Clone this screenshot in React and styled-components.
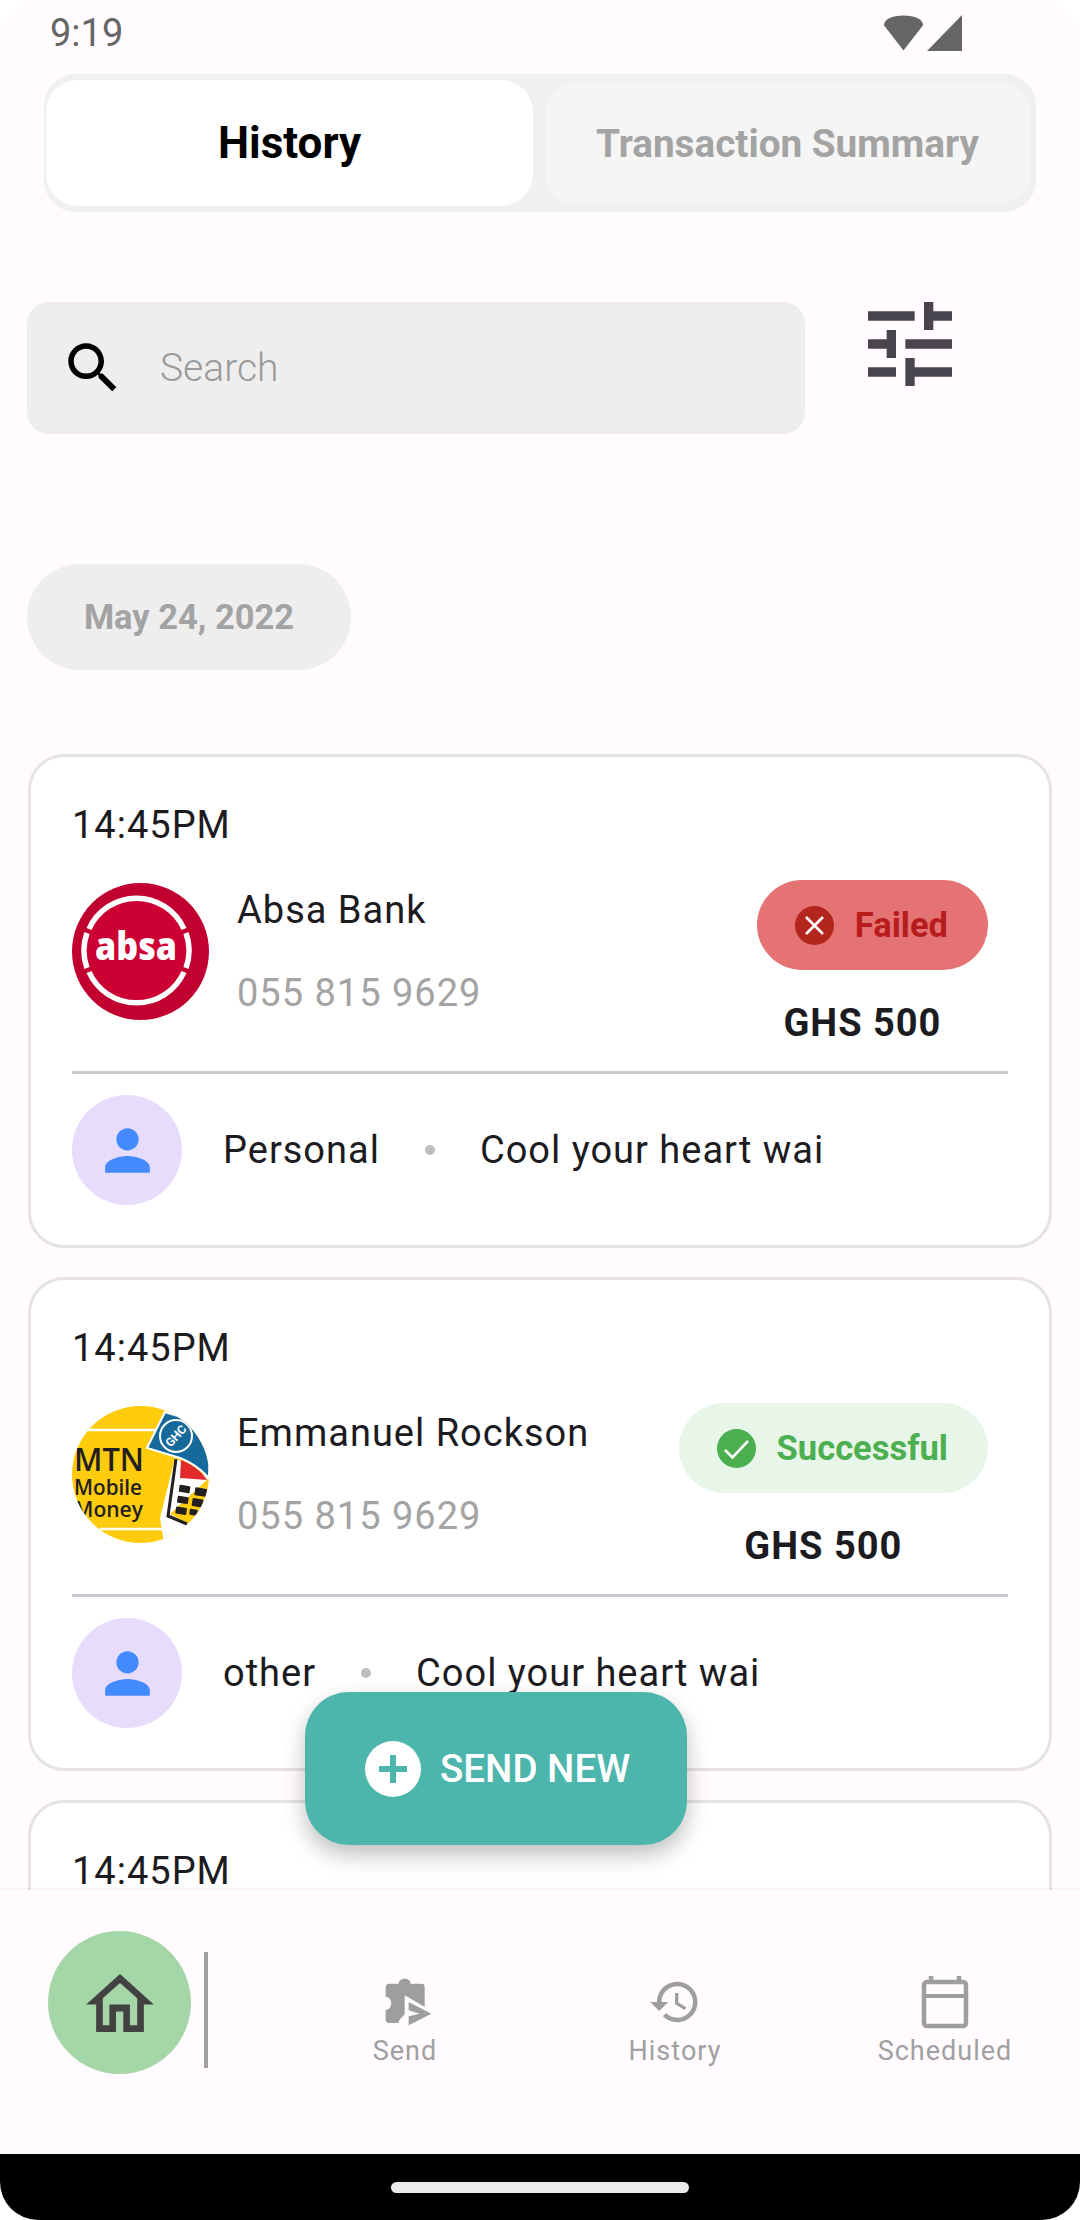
import React from 'react';
import styled, { createGlobalStyle } from 'styled-components';

const GlobalStyle = createGlobalStyle`
  html, body {
    margin: 0;
    padding: 0;
    background: #fff;
    font-family: Roboto, "Liberation Sans", sans-serif;
  }
`;

const WifiIcon = () => (
  <svg width="41" height="36" viewBox="0 0 42 36">
    <path d="M1 10 C1 4 9 0 21 0 C33 0 41 4 41 10 L21 36 Z" fill="#666" />
  </svg>
);

const SignalIcon = () => (
  <svg width="35" height="36" viewBox="0 0 35 36">
    <path d="M35 0 V36 H0 Z" fill="#666" />
  </svg>
);

const SearchIcon = () => (
  <svg width="66" height="66" viewBox="0 0 24 24" fill="#000">
    <path d="M15.5 14h-.79l-.28-.27C15.41 12.59 16 11.11 16 9.5 16 5.91 13.09 3 9.5 3S3 5.91 3 9.5 5.91 16 9.5 16c1.61 0 3.09-.59 4.23-1.57l.27.28v.79l5 4.99L20.49 19l-4.99-5zm-6 0C7.01 14 5 11.99 5 9.5S7.01 5 9.5 5 14 7.01 14 9.5 11.99 14 9.5 14z" />
  </svg>
);

const TuneIcon = () => (
  <svg width="112" height="112" viewBox="0 0 24 24" fill="#49454f">
    <path d="M3 17v2h6v-2H3zM3 5v2h10V5H3zm10 16v-2h8v-2h-8v-2h-2v6h2zM7 9v2H3v2h4v2h2V9H7zm14 4v-2H11v2h10zm-6-4h2V7h4V5h-4V3h-2v6z" />
  </svg>
);

const PersonIcon = () => (
  <svg width="67" height="67" viewBox="0 0 24 24" fill="#448aff">
    <path d="M12 12c2.21 0 4-1.79 4-4s-1.79-4-4-4-4 1.79-4 4 1.79 4 4 4zm0 2c-2.67 0-8 1.34-8 4v2h16v-2c0-2.66-5.33-4-8-4z" />
  </svg>
);

const AbsaLogo = () => (
  <svg width="137" height="137" viewBox="0 0 137 137">
    <circle cx="68.5" cy="68.5" r="68.5" fill="#c1002f" />
    <circle cx="64" cy="67" r="50" fill="#cc0033" />
    <g fill="none" stroke="#fff" strokeWidth="5.5">
      <path d="M17 46 A52 52 0 0 1 112 46" />
      <path d="M17 89 A52 52 0 0 0 112 89" />
      <path d="M15 50 A52 52 0 0 0 15 85" />
      <path d="M114 50 A52 52 0 0 1 114 85" />
    </g>
    <text
      x="64"
      y="77"
      fill="#fff"
      fontFamily="'Open Sans', sans-serif"
      fontSize="38"
      fontWeight="800"
      textAnchor="middle"
      textLength="82"
      lengthAdjust="spacingAndGlyphs"
    >
      absa
    </text>
  </svg>
);

const MtnLogo = () => (
  <svg width="137" height="137" viewBox="0 0 137 137">
    <defs>
      <clipPath id="mtnClip">
        <circle cx="68.5" cy="68.5" r="68.5" />
      </clipPath>
    </defs>
    <g clipPath="url(#mtnClip)">
      <rect width="137" height="137" fill="#ffcb0d" />
      <path d="M12 24 H90 M28 123 H112" stroke="#fff" strokeWidth="2.5" />
      <path d="M93 6 L137 20 L137 72 C128 62 118 56 108 52 L75 42 Z" fill="#15699b" stroke="#fff" strokeWidth="2" />
      <circle cx="104" cy="30" r="16" fill="#15699b" stroke="#fff" strokeWidth="2" />
      <text
        x="104"
        y="34"
        fill="#fff"
        fontFamily="Roboto, sans-serif"
        fontSize="12"
        fontWeight="700"
        textAnchor="middle"
        transform="rotate(-48 104 30)"
      >
        GHC
      </text>
      <path d="M98 108 L137 128 L137 137 L92 137 L88 112 L103 52 L137 72 Z" fill="#fff" />
      <path d="M109 54 C120 58 130 66 135 74 L108 72 Z" fill="#e12a2b" />
      <path d="M104 53 L96 110 L115 118" fill="none" stroke="#231f20" strokeWidth="3" />
      <g fill="#231f20" transform="rotate(9 115 90)">
        <rect x="106" y="80" width="11" height="7" rx="1" />
        <rect x="122" y="80" width="12" height="8" rx="1" />
        <rect x="106" y="91" width="11" height="7" rx="1" />
        <rect x="121" y="91" width="11" height="8" rx="1" />
        <rect x="106" y="102" width="11" height="7" rx="1" />
        <rect x="120" y="102" width="8" height="6" rx="1" />
      </g>
      <text x="2" y="65" fill="#231f20" fontFamily="'Open Sans', sans-serif" fontSize="32" fontWeight="600" textLength="70" lengthAdjust="spacingAndGlyphs">
        MTN
      </text>
      <text x="2" y="89" fill="#231f20" fontFamily="'Open Sans', sans-serif" fontSize="21" fontWeight="600" textLength="68" lengthAdjust="spacingAndGlyphs">
        Mobile
      </text>
      <text x="2" y="111" fill="#231f20" fontFamily="'Open Sans', sans-serif" fontSize="21" fontWeight="600" textLength="69" lengthAdjust="spacingAndGlyphs">
        Money
      </text>
    </g>
  </svg>
);

const FailedIcon = () => (
  <svg width="39" height="39" viewBox="0 0 39 39">
    <circle cx="19.5" cy="19.5" r="19.5" fill="#b3261e" />
    <path d="M11 11 L28 28 M28 11 L11 28" stroke="#fff" strokeWidth="2.6" fill="none" />
  </svg>
);

const SuccessIcon = () => (
  <svg width="39" height="39" viewBox="0 0 39 39">
    <circle cx="19.5" cy="19.5" r="19.5" fill="#4caf50" />
    <path d="M8 21 L15.5 28.5 L31 12" stroke="#fff" strokeWidth="2.6" fill="none" />
  </svg>
);

const PlusIcon = () => (
  <svg width="56" height="56" viewBox="0 0 56 56">
    <circle cx="28" cy="28" r="28" fill="#fff" />
    <path d="M28 14 V42 M14 28 H42" stroke="#4db6ac" strokeWidth="6" fill="none" />
  </svg>
);

const HomeIcon = () => (
  <svg width="68" height="58" viewBox="138 155 204 175">
    <path
      fillRule="evenodd"
      fill="#424242"
      d="M240 155 L342 247 H312 V330 H250 V268 H228 V330 H168 V247 H138 Z M240 182 L188 228 V310 H208 V247 H270 V310 H292 V228 Z"
    />
  </svg>
);

const SendIcon = () => (
  <svg width="50" height="50" viewBox="125 80 150 150">
    <path
      fill="#9e9e9e"
      d="M145 100 H172 C172 80 208 80 208 100 H240 Q250 100 250 110 V190 H190 C190 195 172 205 172 218 H145 Q133 218 133 208 V178 C155 180 155 138 133 140 V112 Q133 100 145 100 Z"
    />
    <path fill="#fffbfe" d="M190 135 L285 190 L190 245 Z" />
    <path fill="#9e9e9e" d="M202 155 L270 190 L202 225 V198 L235 190 L202 180 Z" />
  </svg>
);

const HistoryIcon = () => (
  <svg width="54" height="54" viewBox="0 0 24 24" fill="#9e9e9e">
    <path d="M13 3c-4.97 0-9 4.03-9 9H1l3.89 3.89.07.14L9 12H6c0-3.87 3.13-7 7-7s7 3.13 7 7-3.13 7-7 7c-1.93 0-3.68-.79-4.94-2.06l-1.42 1.42C8.27 19.99 10.51 21 13 21c4.97 0 9-4.03 9-9s-4.03-9-9-9zm-1 5v5l4.28 2.54.72-1.21-3.5-2.08V8H12z" />
  </svg>
);

const CalendarIcon = () => (
  <svg width="50" height="54" viewBox="0 0 50 54">
    <rect x="4" y="7" width="42" height="44" rx="3" fill="none" stroke="#9e9e9e" strokeWidth="4.5" />
    <path d="M4 21 H46" stroke="#9e9e9e" strokeWidth="4" />
    <path d="M11 1 V7 M39 1 V7" stroke="#9e9e9e" strokeWidth="4.5" />
  </svg>
);

const transactions = [
  { name: 'Absa Bank', logo: <AbsaLogo />, status: 'failed', category: 'Personal' },
  { name: 'Emmanuel Rockson', logo: <MtnLogo />, status: 'success', category: 'other' },
  { name: 'Absa Bank', logo: <AbsaLogo />, status: 'failed', category: 'Personal' },
];

function TransactionCard({ item }) {
  const failed = item.status === 'failed';
  return (
    <Card>
      <Time>14:45PM</Time>
      <MainRow>
        <Logo>{item.logo}</Logo>
        <Details>
          <Name>{item.name}</Name>
          <Phone>055 815 9629</Phone>
        </Details>
        <StatusColumn>
          <StatusPill $failed={failed}>
            {failed ? <FailedIcon /> : <SuccessIcon />}
            <span>{failed ? 'Failed' : 'Successful'}</span>
          </StatusPill>
          <Amount>GHS 500</Amount>
        </StatusColumn>
      </MainRow>
      <Divider />
      <MetaRow>
        <PersonBadge>
          <PersonIcon />
        </PersonBadge>
        <MetaText>{item.category}</MetaText>
        <Dot />
        <MetaText>Cool your heart wai</MetaText>
      </MetaRow>
    </Card>
  );
}

function App() {
  return (
    <>
      <GlobalStyle />
      <Screen>
        <StatusBar>
          <Clock>9:19</Clock>
          <StatusIcons>
            <WifiIcon />
            <SignalIcon />
          </StatusIcons>
        </StatusBar>
        <Content>
          <Segment>
            <ActiveTab>History</ActiveTab>
            <InactiveTab>Transaction Summary</InactiveTab>
          </Segment>
          <SearchRow>
            <SearchBox>
              <SearchIcon />
              <Placeholder>Search</Placeholder>
            </SearchBox>
            <FilterButton>
              <TuneIcon />
            </FilterButton>
          </SearchRow>
          <DatePill>May 24, 2022</DatePill>
          <CardList>
            {transactions.map((item, i) => (
              <TransactionCard key={i} item={item} />
            ))}
          </CardList>
        </Content>
        <Fab>
          <PlusIcon />
          SEND NEW
        </Fab>
        <BottomNav>
          <HomeCircle>
            <HomeIcon />
          </HomeCircle>
          <NavLine />
          <NavItems>
            <NavItem>
              <NavIcon $shift={5}>
                <SendIcon />
              </NavIcon>
              Send
            </NavItem>
            <NavItem>
              <NavIcon>
                <HistoryIcon />
              </NavIcon>
              History
            </NavItem>
            <NavItem>
              <NavIcon>
                <CalendarIcon />
              </NavIcon>
              Scheduled
            </NavItem>
          </NavItems>
        </BottomNav>
        <GestureBar>
          <GestureHandle />
        </GestureBar>
      </Screen>
    </>
  );
}
export default App;

const Screen = styled.div`
  position: relative;
  width: 1080px;
  height: 2220px;
  display: flex;
  flex-direction: column;
  overflow: hidden;
  background: #fffbfe;
  border-radius: 38px;
`;
const StatusBar = styled.div`
  height: 66px;
  flex-shrink: 0;
  display: flex;
  justify-content: space-between;
  align-items: flex-start;
  padding: 13px 118px 0 50px;
  box-sizing: border-box;
`;
const Clock = styled.div`
  font-size: 38px;
  line-height: 40px;
  color: #666;
`;
const StatusIcons = styled.div`
  display: flex;
  gap: 3px;
  padding-top: 2px;
`;
const Content = styled.div`
  flex: 1;
  min-height: 0;
  overflow: hidden;
  padding-top: 8px;
`;
const Segment = styled.div`
  height: 138px;
  margin: 0 44px;
  box-sizing: border-box;
  padding: 6px 6px 6px 2px;
  display: flex;
  gap: 12px;
  background: #eff0ef;
  border-radius: 32px;
`;
const ActiveTab = styled.div`
  width: 487px;
  display: flex;
  align-items: center;
  justify-content: center;
  background: #fff;
  border-radius: 32px;
  font-size: 44px;
  font-weight: 700;
  color: #000;
`;
const InactiveTab = styled.div`
  flex: 1;
  margin: 3px 0;
  display: flex;
  align-items: center;
  justify-content: center;
  background: #f4f5f4;
  border-radius: 28px;
  font-size: 38.7px;
  font-weight: 700;
  color: #a3a3a3;
`;
const SearchRow = styled.div`
  margin-top: 90px;
  padding-left: 27px;
  display: flex;
  align-items: flex-start;
`;
const SearchBox = styled.div`
  width: 778px;
  height: 132px;
  box-sizing: border-box;
  padding-left: 33px;
  display: flex;
  align-items: center;
  gap: 34px;
  background: #eee;
  border-radius: 22px;
`;
const Placeholder = styled.span`
  font-size: 39px;
  font-weight: 300;
  color: #9a9a9a;
`;
const FilterButton = styled.div`
  margin: -14px 0 0 49px;
  line-height: 0;
`;
const DatePill = styled.div`
  width: 324px;
  height: 106px;
  margin: 130px 0 0 27px;
  display: flex;
  align-items: center;
  justify-content: center;
  background: #eee;
  border-radius: 53px;
  font-size: 34.5px;
  font-weight: 700;
  color: #a3a3a3;
`;
const CardList = styled.div`
  margin-top: 84px;
  padding: 0 28px;
  display: flex;
  flex-direction: column;
  gap: 29px;
`;
const Card = styled.div`
  height: 494px;
  flex-shrink: 0;
  box-sizing: border-box;
  padding: 47px 41px 0;
  background: #fff;
  border: 3px solid #e5e3e6;
  border-radius: 36px;
`;
const Time = styled.div`
  font-size: 38px;
  line-height: 42px;
  color: #1c1b1f;
  letter-spacing: 1px;
`;
const MainRow = styled.div`
  margin-top: 34px;
  height: 191px;
  display: flex;
  align-items: flex-start;
`;
const Logo = styled.div`
  width: 137px;
  height: 137px;
  margin-top: 3px;
  flex-shrink: 0;
  line-height: 0;
`;
const Details = styled.div`
  margin-left: 28px;
  padding-top: 8px;
  display: flex;
  flex-direction: column;
  gap: 39px;
`;
const Name = styled.div`
  font-size: 38px;
  line-height: 44px;
  letter-spacing: 1px;
  color: #1c1b1f;
`;
const Phone = styled.div`
  font-size: 38px;
  line-height: 44px;
  letter-spacing: 1px;
  color: #a3a3a3;
`;
const StatusColumn = styled.div`
  margin: 0 20px 0 auto;
  display: flex;
  flex-direction: column;
  align-items: center;
`;
const StatusPill = styled.div`
  height: 90px;
  box-sizing: border-box;
  padding: 0 40px 0 38px;
  display: flex;
  align-items: center;
  gap: 21px;
  border-radius: 45px;
  font-size: 34.5px;
  font-weight: 700;
  background: ${(p) => (p.$failed ? '#e57373' : '#e8f5e9')};
  color: ${(p) => (p.$failed ? '#b71c1c' : '#4caf50')};
  svg {
    flex-shrink: 0;
  }
`;
const Amount = styled.div`
  margin-top: 30px;
  padding-right: 20px;
  font-size: 38px;
  line-height: 46px;
  font-weight: 700;
  letter-spacing: 1px;
  color: #1c1b1f;
`;
const Divider = styled.div`
  height: 3px;
  background: #cac7d0;
`;
const MetaRow = styled.div`
  margin-top: 21px;
  display: flex;
  align-items: center;
`;
const PersonBadge = styled.div`
  width: 110px;
  height: 110px;
  margin-right: 41px;
  display: flex;
  align-items: center;
  justify-content: center;
  background: #e8dcfd;
  border-radius: 50%;
`;
const MetaText = styled.div`
  font-size: 38px;
  letter-spacing: 1px;
  color: #1c1b1f;
`;
const Dot = styled.div`
  width: 10px;
  height: 10px;
  margin: 0 45px;
  border-radius: 50%;
  background: #bdbdbd;
`;
const Fab = styled.div`
  position: absolute;
  left: 305px;
  bottom: 375px;
  width: 382px;
  height: 153px;
  box-sizing: border-box;
  padding-left: 60px;
  display: flex;
  align-items: center;
  gap: 19px;
  background: #4db6ac;
  border-radius: 44px;
  box-shadow: 0 10px 22px rgba(0, 0, 0, 0.25);
  font-size: 38.5px;
  font-weight: 500;
  color: #fff;
`;
const BottomNav = styled.div`
  position: relative;
  height: 264px;
  flex-shrink: 0;
  box-sizing: border-box;
  padding: 41px 0 0 48px;
  display: flex;
  align-items: flex-start;
  background: #fffbfe;
  box-shadow: 0 -1px 4px rgba(0, 0, 0, 0.06);
`;
const HomeCircle = styled.div`
  width: 143px;
  height: 143px;
  display: flex;
  align-items: center;
  justify-content: center;
  background: #a5d6a7;
  border-radius: 50%;
`;
const NavLine = styled.div`
  width: 4px;
  height: 116px;
  margin: 21px 0 0 13px;
  background: #9e9e9e;
`;
const NavItems = styled.div`
  flex: 1;
  margin-left: 62px;
  padding-top: 44px;
  display: flex;
`;
const NavItem = styled.div`
  flex: 1;
  display: flex;
  flex-direction: column;
  align-items: center;
  gap: 6px;
  font-size: 27px;
  line-height: 32px;
  letter-spacing: 1px;
  color: #a0a0a0;
`;
const NavIcon = styled.div`
  height: 54px;
  margin-left: ${(p) => p.$shift || 0}px;
  display: flex;
  align-items: center;
  justify-content: center;
`;
const GestureBar = styled.div`
  height: 66px;
  flex-shrink: 0;
  display: flex;
  justify-content: center;
  padding-top: 28px;
  box-sizing: border-box;
  background: #000;
`;
const GestureHandle = styled.div`
  width: 298px;
  height: 11px;
  border-radius: 6px;
  background: #eaeaea;
`;
